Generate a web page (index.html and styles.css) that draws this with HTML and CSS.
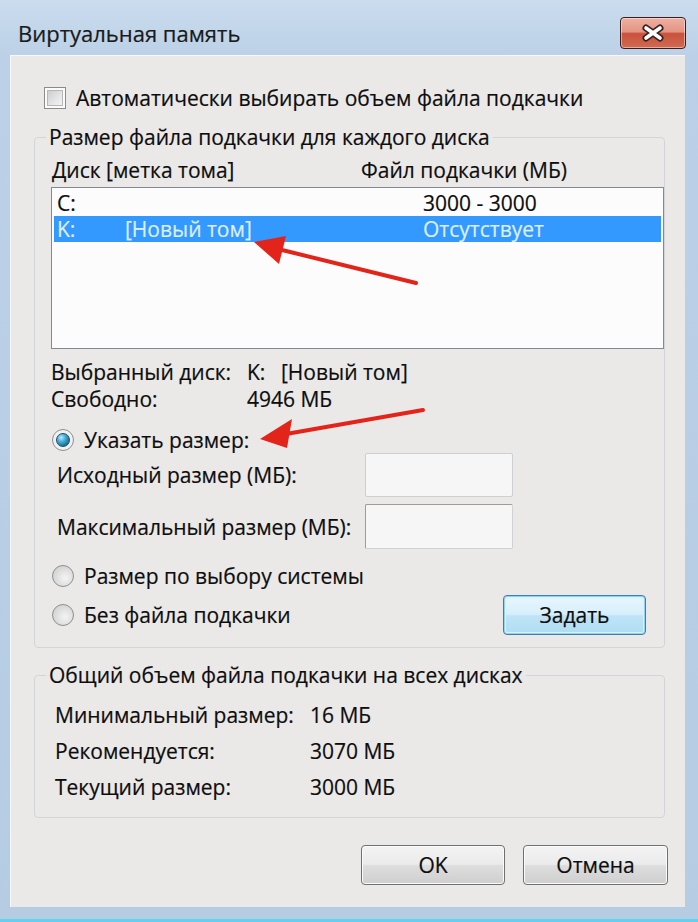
FILE: index.html
```html
<!DOCTYPE html>
<html lang="ru">
<head>
<meta charset="utf-8">
<title>Виртуальная память</title>
<link rel="stylesheet" href="styles.css">
</head>
<body>
<div class="window">
  <div class="titlebar">
    <div class="title">Виртуальная память</div>
    <div class="close">
      <svg width="26" height="18" viewBox="0 0 26 18">
        <path d="M6 4 L20 14 M20 4 L6 14" stroke="#3a2222" stroke-width="7" stroke-linecap="round" fill="none"/>
        <path d="M6 4 L20 14 M20 4 L6 14" stroke="#ffffff" stroke-width="3.6" stroke-linecap="round" fill="none"/>
      </svg>
    </div>
  </div>
  <div class="client">
    <div class="check-row"><span class="checkbox"><span class="checkbox-inner"></span></span><span>Автоматически выбирать объем файла подкачки</span></div>

    <fieldset class="group group-disks">
      <legend>Размер файла подкачки для каждого диска</legend>
      <div class="cols"><span class="col-disk">Диск [метка тома]</span><span>Файл подкачки (МБ)</span></div>
      <div class="listbox">
        <div class="row"><span class="c1">C:</span><span class="c2"></span><span class="c3">3000 - 3000</span></div>
        <div class="row selected"><span class="c1">K:</span><span class="c2">[Новый том]</span><span class="c3">Отсутствует</span></div>
      </div>
      <div class="info">
        <div class="info-row"><span class="info-label">Выбранный диск:</span><span class="drive">K:</span><span>[Новый том]</span></div>
        <div class="info-row"><span class="info-label">Свободно:</span><span>4946 МБ</span></div>
      </div>
      <div class="radio-row first-radio"><span class="radio checked"><span class="dot"></span></span><span>Указать размер:</span></div>
      <div class="size-row"><span class="size-label">Исходный размер (МБ):</span><span class="input"></span></div>
      <div class="size-row second"><span class="size-label">Максимальный размер (МБ):</span><span class="input focused"></span></div>
      <div class="radio-row sys-radio"><span class="radio"></span><span>Размер по выбору системы</span></div>
      <div class="last-row">
        <div class="radio-line"><span class="radio"></span><span>Без файла подкачки</span></div>
        <button class="btn btn-default">Задать</button>
      </div>
    </fieldset>

    <fieldset class="group group-total">
      <legend>Общий объем файла подкачки на всех дисках</legend>
      <div class="totals">
        <div class="total-row"><span class="total-label">Минимальный размер:</span><span>16 МБ</span></div>
        <div class="total-row"><span class="total-label">Рекомендуется:</span><span>3070 МБ</span></div>
        <div class="total-row"><span class="total-label">Текущий размер:</span><span>3000 МБ</span></div>
      </div>
    </fieldset>

    <div class="buttons">
      <button class="btn btn-ok">OK</button>
      <button class="btn btn-cancel">Отмена</button>
    </div>
  </div>
</div>
<svg class="arrows" width="698" height="922" viewBox="0 0 698 922">
  <line x1="416" y1="283" x2="278" y2="249" stroke="#e3241b" stroke-width="4" stroke-linecap="round"/>
  <polygon points="254,242 286,236 279,264" fill="#e3241b"/>
  <line x1="423" y1="410" x2="286" y2="434" stroke="#e3241b" stroke-width="4" stroke-linecap="round"/>
  <polygon points="260,439 292,419 287,448" fill="#e3241b"/>
</svg>
</body>
</html>
```

FILE: styles.css
```css
html, body {
  margin: 0;
  padding: 0;
}

body {
  width: 698px;
  height: 922px;
  overflow: hidden;
  position: relative;
  font-family: "Open Sans", "Noto Sans", sans-serif;
  font-size: 21px;
  color: #0d0d0d;
  -webkit-text-stroke: 0.2px #0d0d0d;
}

.window {
  box-sizing: border-box;
  height: 922px;
  padding: 0 13px 12px 10px;
  background: linear-gradient(180deg, #cadcee 0px, #bcd1e7 55px, #b6cce2 100%);
  border-bottom: 3px solid #5fd2ef;
  display: flex;
  flex-direction: column;
}

.titlebar {
  flex: none;
  height: 55px;
  display: flex;
  justify-content: space-between;
  align-items: flex-start;
}

.title {
  padding: 18px 0 0 8px;
  font-size: 22px;
  line-height: 30px;
  color: #1b1b1b;
}

.close {
  margin-top: 17px;
  margin-right: -1px;
  width: 66px;
  height: 32px;
  box-sizing: border-box;
  border: 1px solid #3a1e1e;
  border-radius: 4px;
  background: linear-gradient(180deg, #eeb0a2 0%, #e59482 46%, #c9523c 52%, #d06a52 100%);
  box-shadow: inset 0 0 0 1px rgba(255, 255, 255, 0.45);
  display: flex;
  align-items: center;
  justify-content: center;
}

.client {
  flex: 1;
  background: #ebe9e8;
  padding: 0 20px 0 24px;
  display: flex;
  flex-direction: column;
  box-shadow: inset 1px 1px 0 #f7f7f7;
}

.check-row {
  margin: 30px 0 0 10px;
  height: 26px;
  display: flex;
  align-items: center;
  gap: 10px;
}

.checkbox {
  width: 22px;
  height: 22px;
  box-sizing: border-box;
  border: 1px solid #8b8b8b;
  background: #fbfbfb;
  padding: 2px;
  display: flex;
}

.checkbox-inner {
  flex: 1;
  border: 1px solid #b6b6b6;
  background: linear-gradient(135deg, #cdcdcd 0%, #e6e6e6 60%, #f3f3f3 100%);
}

.group {
  margin: 13px 0 0;
  padding: 0 0 12px 16px;
  border: 1px solid #d2d5d8;
  border-radius: 4px;
  min-width: 0;
}

.group legend {
  padding: 0 3px;
  margin-left: -5px;
  line-height: 26px;
}

.cols {
  margin-top: 7px;
  height: 26px;
  line-height: 26px;
  display: flex;
  padding-left: 1px;
}

.col-disk {
  width: 309px;
}

.listbox {
  margin-top: 4px;
  height: 162px;
  box-sizing: border-box;
  border: 1px solid #848890;
  background: #fcfcfc;
  padding: 2px 1px;
}

.row {
  height: 26px;
  line-height: 26px;
  display: flex;
  padding-left: 3px;
  margin: 0 1px;
}

.c1 {
  width: 68px;
}

.c2 {
  width: 298px;
}

.row.selected {
  background: #3399ff;
  color: #dcefff;
  -webkit-text-stroke: 0.2px #dcefff;
}

.info {
  margin-top: 10px;
  display: flex;
  flex-direction: column;
  gap: 1px;
}

.info-row {
  height: 26px;
  line-height: 26px;
  display: flex;
}

.info-label {
  width: 196px;
}

.drive {
  width: 34px;
}

.radio-row,
.radio-line {
  height: 26px;
  display: flex;
  align-items: center;
  gap: 10px;
  padding-left: 1px;
}

.first-radio {
  margin-top: 15px;
}

.sys-radio {
  margin-top: 14px;
}

.radio {
  width: 22px;
  height: 22px;
  box-sizing: border-box;
  border-radius: 50%;
  border: 1px solid #8d8f91;
  background: radial-gradient(circle at 60% 60%, #f4f4f4 0%, #dcdcdc 55%, #c9c9c9 100%);
  display: flex;
  align-items: center;
  justify-content: center;
}

.radio.checked {
  background: radial-gradient(circle at 50% 50%, #e8e8e8 0%, #f6f6f6 100%);
}

.dot {
  width: 14px;
  height: 14px;
  border-radius: 50%;
  box-sizing: border-box;
  border: 1px solid #1d4f66;
  background: radial-gradient(circle at 35% 30%, #b9ecff 0%, #4bb0d8 35%, #1b6f95 75%, #11506e 100%);
}

.size-row {
  display: flex;
  align-items: center;
  height: 44px;
  padding-left: 6px;
}

.size-row.second {
  margin-top: 7px;
  height: 45px;
}

.size-label {
  width: 308px;
}

.input {
  width: 148px;
  height: 100%;
  box-sizing: border-box;
  border: 1px solid #cdcfd1;
  border-radius: 2px;
  background: #f6f6f6;
}

.input.focused {
  border-color: #9a9c9e #cfd1d3 #cfd1d3 #9a9c9e;
}

.last-row {
  margin-top: 6px;
  height: 40px;
  display: flex;
  align-items: center;
  justify-content: space-between;
  padding-right: 18px;
}

.btn {
  height: 40px;
  box-sizing: border-box;
  border: 1px solid #707070;
  border-radius: 4px;
  background: linear-gradient(180deg, #f3f3f3 0%, #ebebeb 48%, #dddddd 52%, #cfcfcf 100%);
  box-shadow: inset 0 0 0 1px #fbfbfb;
  font-family: inherit;
  font-size: 21px;
  color: #0d0d0d;
  -webkit-text-stroke: 0.2px #0d0d0d;
  padding: 0;
}

.btn-default {
  width: 143px;
  border-color: #3c7fb1;
  background: linear-gradient(180deg, #e8f6fd 0%, #d7effb 48%, #bfe4f7 52%, #b0dcf3 100%);
  box-shadow: inset 0 0 0 1px #8fd3f0, inset 0 0 0 2px #d9f2fd;
}

.group-total {
  margin-top: 14px;
  padding-bottom: 17px;
}

.totals {
  margin-top: 14px;
  display: flex;
  flex-direction: column;
  gap: 10px;
  padding-left: 4px;
}

.total-row {
  height: 26px;
  line-height: 26px;
  display: flex;
}

.total-label {
  width: 255px;
}

.buttons {
  margin-top: 27px;
  margin-right: -3px;
  display: flex;
  justify-content: flex-end;
  gap: 18px;
}

.btn-ok {
  width: 144px;
}

.btn-cancel {
  width: 145px;
}

.arrows {
  position: absolute;
  left: 0;
  top: 0;
  pointer-events: none;
}
```
